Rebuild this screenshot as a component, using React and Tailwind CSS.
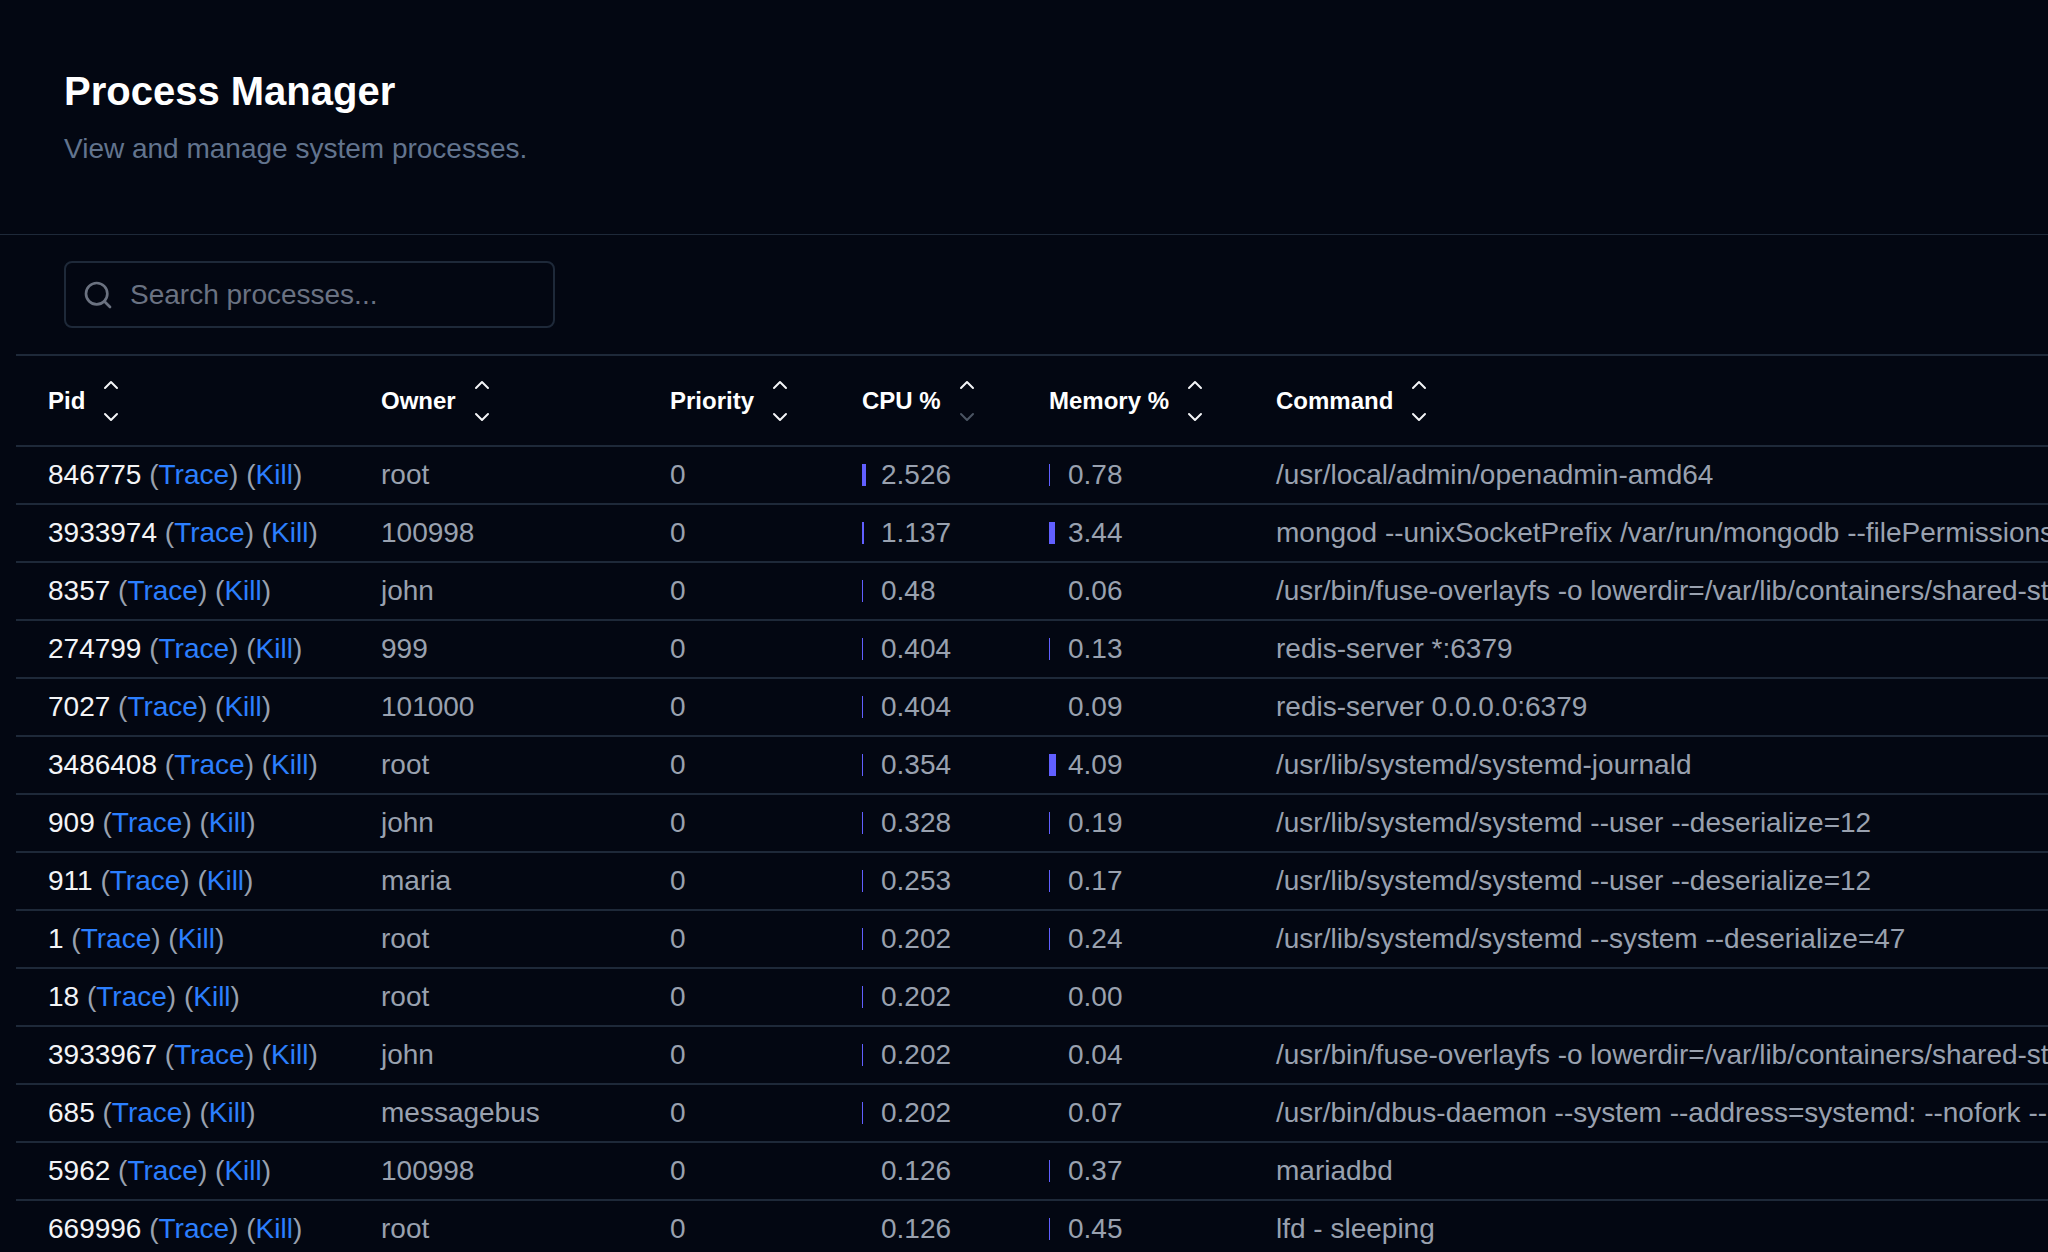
import React from "react";

const rows = [
  ["846775","root","2.526","0.78","/usr/local/admin/openadmin-amd64"],
  ["3933974","100998","1.137","3.44","mongod --unixSocketPrefix /var/run/mongodb --filePermissions --config /etc/mongod.conf"],
  ["8357","john","0.48","0.06","/usr/bin/fuse-overlayfs -o lowerdir=/var/lib/containers/shared-storage/overlay"],
  ["274799","999","0.404","0.13","redis-server *:6379"],
  ["7027","101000","0.404","0.09","redis-server 0.0.0.0:6379"],
  ["3486408","root","0.354","4.09","/usr/lib/systemd/systemd-journald"],
  ["909","john","0.328","0.19","/usr/lib/systemd/systemd --user --deserialize=12"],
  ["911","maria","0.253","0.17","/usr/lib/systemd/systemd --user --deserialize=12"],
  ["1","root","0.202","0.24","/usr/lib/systemd/systemd --system --deserialize=47"],
  ["18","root","0.202","0.00",""],
  ["3933967","john","0.202","0.04","/usr/bin/fuse-overlayfs -o lowerdir=/var/lib/containers/shared-storage/overlay"],
  ["685","messagebus","0.202","0.07","/usr/bin/dbus-daemon --system --address=systemd: --nofork --nopidfile"],
  ["5962","100998","0.126","0.37","mariadbd"],
  ["669996","root","0.126","0.45","lfd - sleeping"],
];

function Sort({ dimDown }) {
  return (
    <svg width="20" height="46" viewBox="0 0 20 46" fill="none" strokeWidth="2" strokeLinecap="round" strokeLinejoin="round" className="ml-4">
      <path d="M4 10 L10 4 L16 10" stroke="#f3f4f6" />
      <path d="M4 36 L10 42 L16 36" stroke={dimDown ? "#4b5563" : "#f3f4f6"} />
    </svg>
  );
}

function Bar({ v, scale, min }) {
  const n = parseFloat(v);
  const w = n >= min ? Math.max(1, Math.round(n * scale)) : 0;
  return (
    <span className="inline-flex items-center w-[19px] shrink-0">
      {w > 0 && <span className="inline-block h-[22px] bg-indigo-500" style={{ width: Math.min(w, 8) }} />}
    </span>
  );
}

const cols = ["w-[333px]", "w-[289px]", "w-[192px]", "w-[187px]", "w-[227px]"];

export default function App() {
  return (
    <div className="min-h-[1252px] bg-[#030712] text-gray-400 overflow-hidden" style={{ fontFamily: '"Liberation Sans", Arial, sans-serif' }}>
      <div className="px-16 pt-[66px] pb-[64px]">
        <h1 className="text-[40px] font-bold text-white leading-tight">Process Manager</h1>
        <p className="mt-[12px] text-[28px] text-slate-500">View and manage system processes.</p>
      </div>
      <div className="border-t border-gray-800 pt-[26px]">
        <div className="ml-16 w-[491px] h-[67px] border-2 border-gray-800 rounded-lg flex items-center px-4 gap-4">
          <svg width="32" height="32" viewBox="0 0 24 24" fill="none" stroke="#6b7280" strokeWidth="2" strokeLinecap="round"><circle cx="11" cy="11" r="8"/><path d="m21 21-4.3-4.3"/></svg>
          <span className="text-[28px] text-gray-500">Search processes...</span>
        </div>
        <div className="ml-4 mt-[26px] border-t-2 border-gray-800">
          <div className="flex h-[91px] items-center border-b-2 border-gray-800 text-[24px] font-bold text-white whitespace-nowrap">
            {["Pid","Owner","Priority","CPU %","Memory %"].map((h,i)=>(
              <div key={h} className={`${cols[i]} pl-8 flex items-center shrink-0`}>{h}<Sort dimDown={i===3}/></div>
            ))}
            <div className="pl-8 flex items-center">Command<Sort/></div>
          </div>
          {rows.map((r)=>(
            <div key={r[0]} className="flex h-[58px] items-center border-b-2 border-gray-800 text-[28px] whitespace-nowrap">
              <div className={`${cols[0]} pl-8 shrink-0 text-gray-100`}>{r[0]} <span className="text-gray-400">(</span><span className="text-blue-500">Trace</span><span className="text-gray-400">)</span> <span className="text-gray-400">(</span><span className="text-blue-500">Kill</span><span className="text-gray-400">)</span></div>
              <div className={`${cols[1]} pl-8 shrink-0`}>{r[1]}</div>
              <div className={`${cols[2]} pl-8 shrink-0`}>0</div>
              <div className={`${cols[3]} pl-8 shrink-0 flex items-center`}><Bar v={r[2]} scale={1.6} min={0.15}/>{r[2]}</div>
              <div className={`${cols[4]} pl-8 shrink-0 flex items-center`}><Bar v={r[3]} scale={1.7} min={0.1}/>{r[3]}</div>
              <div className="pl-8 overflow-hidden">{r[4]}</div>
            </div>
          ))}
        </div>
      </div>
    </div>
  );
}
